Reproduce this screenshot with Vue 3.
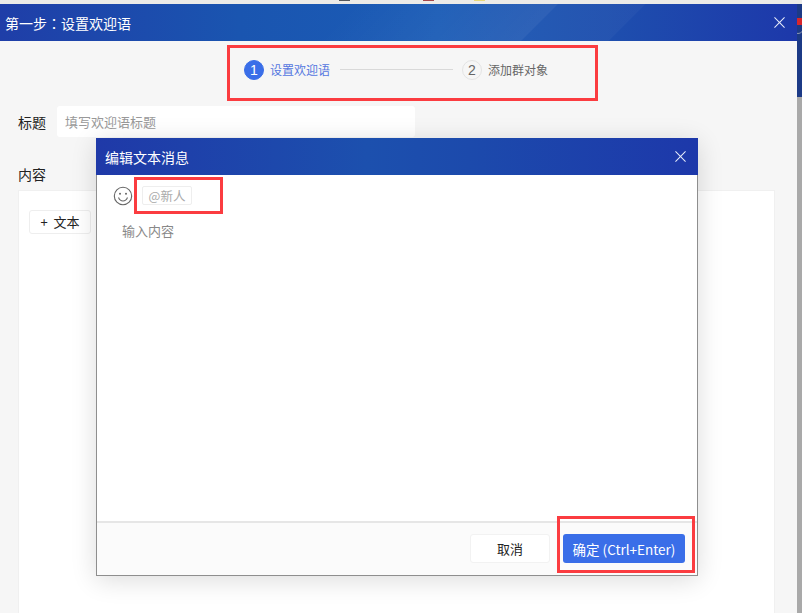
<script setup>
const steps = [
  { n: 1, label: '设置欢迎语', active: true },
  { n: 2, label: '添加群对象', active: false }
]
</script>

<template>
  <div class="screen">
    <div class="topstrip">
      <i class="tick t1"></i><i class="tick t2"></i><i class="tick t3"></i>
    </div>
    <div class="main">
      <div class="window">
        <header class="bar winbar">
          <span class="wintitle">第一步<span class="colon">：</span>设置欢迎语</span>
          <svg class="close" viewBox="0 0 12 12"><path d="M.5.5l11 11M11.500.5l-11 11" /></svg>
        </header>
        <div class="stepsrow">
          <div v-for="(s, i) in steps" :key="s.n" class="stepwrap">
            <div class="step" :class="{ on: s.active }">
              <span class="num">{{ s.n }}</span>
              <span class="lbl">{{ s.label }}</span>
            </div>
            <div v-if="i === 0" class="line"></div>
          </div>
        </div>
        <div class="titlerow">
          <span class="flabel">标题</span>
          <div class="input">填写欢迎语标题</div>
        </div>
        <div class="flabel contentlabel">内容</div>
        <div class="card">
          <button class="addbtn">+&nbsp;&nbsp;文本</button>
        </div>
      </div>
      <div class="side">
        <div class="sidetop"><i class="ring"></i><i class="redmark"></i></div>
      </div>
    </div>

    <div class="modal">
      <header class="bar modalbar">
        <span class="modaltitle">编辑文本消息</span>
        <svg class="close small" viewBox="0 0 12 12"><path d="M.5.5l11 11M11.500.5l-11 11" /></svg>
      </header>
      <div class="modalbody">
        <div class="tools">
          <svg class="smile" viewBox="0 0 20 20">
            <circle cx="10" cy="10" r="8.700" />
            <circle class="eye" cx="7" cy="7.800" r="1" />
            <circle class="eye" cx="13" cy="7.800" r="1" />
            <path d="M5.500 11.500c1 2.300 2.600 3.500 4.500 3.500s3.500-1.200 4.500-3.500" />
          </svg>
          <span class="tag">@新人</span>
        </div>
        <div class="placeholder">输入内容</div>
      </div>
      <footer class="modalfoot">
        <button class="btn cancel">取消</button>
        <button class="btn ok">确定 (Ctrl+Enter)</button>
      </footer>
    </div>

    <i class="mark m1"></i>
    <i class="mark m2"></i>
    <i class="mark m3"></i>
  </div>
</template>

<style>
html, body { margin: 0; background: #f6f6f6; }
</style>

<style scoped>
.screen {
  position: relative;
  width: 802px;
  height: 613px;
  overflow: hidden;
  display: flex;
  flex-direction: column;
  background: #f6f6f6;
  font-family: "Noto Sans CJK SC", "Liberation Sans", sans-serif;
}
.topstrip {
  height: 4px;
  flex: none;
  background: #ecebe8;
  position: relative;
}
.tick { position: absolute; top: 0; height: 1px; width: 11px; }
.t1 { left: 339px; background: #55585c; }
.t2 { left: 423px; background: #a5474a; }
.t3 { left: 474px; background: #e8d878; }
.main { flex: 1; display: flex; min-height: 0; }
.window { width: 797px; flex: none; display: flex; flex-direction: column; background: #f6f6f6; }
.side { flex: 1; background: #a9a9a9; }
.sidetop { height: 93px; background: #1c3a86; position: relative; overflow: hidden; }
.redmark { position: absolute; left: 0; top: 14px; width: 5px; height: 7px; background: #d8262c; }
.ring { position: absolute; left: -5px; top: 18px; width: 10px; height: 10px; border-radius: 50%; border: 1px solid #8d97b4; }
.bar {
  display: flex;
  align-items: center;
  justify-content: space-between;
  color: #fff;
  flex: none;
  box-sizing: border-box;
}
.winbar {
  height: 37px;
  padding: 0 12px 0 5px;
  background:
    linear-gradient(135deg, rgba(255,255,255,0) 250px, rgba(255,255,255,.08) 394px, rgba(255,255,255,.03) 395px, rgba(255,255,255,.03) 456px, rgba(255,255,255,0) 457px),
    linear-gradient(90deg, #1f3ea8 0, #1a55b0 30%, #1b5cb6 55%, #1e4fae 76%, #1d38aa 100%);
}
.wintitle { font-size: 14px; }
.colon { font-family: "Noto Sans CJK TC", sans-serif; }
.close { fill: none; stroke: #e9edfa; stroke-width: 1.100; width: 11px; height: 11px; }
.stepsrow {
  height: 57px;
  flex: none;
  box-sizing: border-box;
  padding: 0 0 0 244px;
  display: flex;
  align-items: flex-start;
}
.stepwrap { display: flex; align-items: center; height: 58px; }
.step { display: flex; align-items: center; gap: 6px; font-size: 12px; color: #666; margin-top: -1px; }
.step.on { color: #5476e0; }
.num {
  box-sizing: border-box;
  width: 20px;
  height: 20px;
  border-radius: 50%;
  border: 1px solid #e4e4e4;
  display: flex;
  align-items: center;
  justify-content: center;
  font-family: "Liberation Sans", sans-serif;
  font-size: 14px;
  color: #666;
}
.step.on .num { background: #3a6ee8; border-color: #3a6ee8; color: #fff; }
.line { width: 113px; height: 1px; background: #d9d9d9; margin: -1px 9px 0 10px; }
.titlerow { display: flex; align-items: center; padding: 8px 0 0 18px; gap: 11px; }
.flabel { font-size: 14px; color: #222; }
.input {
  box-sizing: border-box;
  width: 358px;
  height: 31px;
  background: #fff;
  border-radius: 3px;
  font-size: 13px;
  color: #999;
  padding: 0 8px;
  display: flex;
  align-items: center;
}
.contentlabel { padding: 27px 0 0 18px; line-height: 20px; }
.card {
  flex: 1;
  margin: 6px 22px 0 18px;
  background: #fff;
  border: 1px solid #f0f0f0;
  border-bottom: 0;
  padding: 17px 10px;
  box-sizing: border-box;
}
.addbtn {
  font: inherit;
  font-size: 13px;
  width: 62px;
  height: 24px;
  padding: 0;
  background: #fff;
  color: #222;
  border: 1px solid #eee;
  border-radius: 3px;
}
.modal {
  position: absolute;
  left: 96px;
  top: 138px;
  width: 602px;
  height: 438px;
  box-sizing: border-box;
  display: flex;
  flex-direction: column;
  background: #fff;
  border: 1px solid #8e8e8e;
  border-top: 0;
  box-shadow: 0 4px 24px rgba(0,0,0,.14);
}
.modalbar {
  height: 37px;
  margin: 0 -1px;
  padding: 0 12px 0 9px;
  background: linear-gradient(90deg, #1f39a8 0, #1c50ae 45%, #1c4aac 62%, #1d38aa 100%);
}
.modaltitle { font-size: 14px; }
.modalbody { flex: 1; padding: 11px 0 0 16px; }
.tools { display: flex; align-items: center; gap: 9px; height: 20px; }
.smile { width: 20px; height: 20px; fill: none; stroke: #666; stroke-width: 1.100; }
.eye { fill: #666; stroke: none; }
.tag {
  box-sizing: border-box;
  width: 50px;
  height: 19px;
  margin-top: -1px;
  border: 1px solid #eeeeee;
  border-radius: 2px;
  font-size: 12.500px;
  color: #aaa;
  display: flex;
  align-items: center;
  justify-content: center;
}
.placeholder { margin: 15px 0 0 9px; font-size: 13px; line-height: 20px; color: #888; }
.modalfoot {
  height: 54px;
  flex: none;
  box-sizing: border-box;
  border-top: 2px solid #e6e6e6;
  background: #fbfbfb;
  display: flex;
  justify-content: flex-end;
  align-items: flex-start;
  gap: 13px;
  padding: 11px 12px 0 0;
}
.btn {
  font: inherit;
  height: 29px;
  padding: 0;
  border-radius: 3px;
  border: 0;
  font-size: 13px;
}
.cancel { width: 80px; background: #fff; color: #222; border: 1px solid #f2f2f2; }
.ok { width: 122px; background: #3a6ee8; color: #fff; font-size: 13.500px; }
.mark { position: absolute; box-sizing: border-box; border: 3px solid #fb3c40; pointer-events: none; }
.m1 { left: 227px; top: 45px; width: 371px; height: 56px; }
.m2 { left: 134px; top: 177px; width: 89px; height: 37px; }
.m3 { left: 557px; top: 516px; width: 138px; height: 57px; }
</style>
